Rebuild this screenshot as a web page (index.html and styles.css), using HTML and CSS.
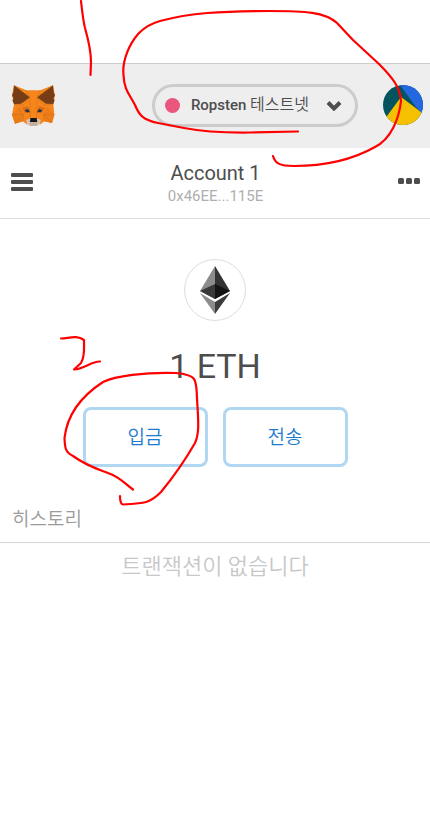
FILE: index.html
```html
<!DOCTYPE html>
<html lang="ko">
<head>
<meta charset="utf-8">
<meta name="viewport" content="width=device-width, initial-scale=1">
<title>MetaMask</title>
<link rel="stylesheet" href="styles.css">
</head>
<body>
<header class="app-header">
  <svg class="fox" viewBox="36 75 129 123" aria-hidden="true">
    <path fill="#f6851b" d="M42 76 79 91H121L159 76 165 105 160 132 163 164 156 189 132 184 122 193H79L69 184 45 191 36 164 42 133 36 105Z"/>
    <path fill="#ee7d19" d="M36 164 58 142 70 164 69 184 45 191ZM163 164 143 142 131 164 132 184 156 189Z"/>
    <path fill="#763d16" d="M42 76 90 112 63 131 42 133 37 120 41 116 36 105 40 98ZM159 76 111 112 138 131 160 132 164 120 160 116 165 105 161 98Z"/>
    <path fill="#d7c1b3" d="M79 180 91 175H111L122 180 120 191 112 197H89L80 191Z"/>
    <path fill="#c0ad9e" d="M88 187H113L111 197H90Z"/>
    <path fill="#161616" d="M91 174H110L112 186H90Z"/>
    <path fill="#d96c18" d="M66 143 84 139 91 156 75 158ZM135 143 117 139 110 156 126 158Z"/>
    <path fill="#233447" d="M74 151 84 147 90 157 79 157ZM127 151 117 147 111 157 122 157Z"/>
    <path class="fox-lines" d="M42 76 90 112 79 91M159 76 111 112 121 91M90 112 91 174M111 112 110 174M90 112 69 136 42 133M111 112 132 136 160 132M58 142 70 164 45 191M143 142 131 164 156 189M70 164 69 184M131 164 132 184M36 164H70M163 164H131"/>
  </svg>
  <button class="network" type="button">
    <span class="network-dot"></span>
    <span class="network-name">Ropsten <span class="network-kind">테스트넷</span></span>
    <svg class="chevron" viewBox="0 0 16 11" aria-hidden="true"><path d="M2 2.5 8 8.500 14 2.500"/></svg>
  </button>
  <button class="avatar" type="button" aria-label="내 계정">
    <svg viewBox="0 0 40 40" aria-hidden="true">
      <path fill="#03545e" d="M0 0H40V40H0Z"/>
      <path fill="#f5c000" d="M18 12 38 27V40H0V37L4 31Z"/>
      <path fill="#2467e0" d="M17 0H40V29L33 22Z"/>
    </svg>
  </button>
</header>

<section class="account-bar">
  <button class="icon-button" type="button" aria-label="메뉴">
    <svg class="menu-icon" viewBox="0 0 22 18" aria-hidden="true"><rect width="22" height="4" rx="1"/><rect y="7" width="22" height="4" rx="1"/><rect y="14" width="22" height="4" rx="1"/></svg>
  </button>
  <div class="account">
    <h1 class="account-name">Account 1</h1>
    <div class="account-address">0x46EE...115E</div>
  </div>
  <button class="icon-button" type="button" aria-label="계정 옵션">
    <svg class="more-icon" viewBox="0 0 22 6" aria-hidden="true"><rect width="6" height="6" rx="1.5"/><rect x="8" width="6" height="6" rx="1.5"/><rect x="16" width="6" height="6" rx="1.5"/></svg>
  </button>
</section>

<main>
  <section class="overview">
    <div class="token">
      <svg viewBox="0 0 30 48" aria-hidden="true">
        <path fill="#8c8c8c" d="M15 0V33L0 25Z"/>
        <path fill="#343434" d="M15 0V33L30 25Z"/>
        <path fill="#393939" d="M15 18V33L0 25Z"/>
        <path fill="#141414" d="M15 18V33L30 25Z"/>
        <path fill="#8c8c8c" d="M15 36V48L0 27Z"/>
        <path fill="#3c3c3b" d="M15 36V48L30 27Z"/>
      </svg>
    </div>
    <div class="balance">1 ETH</div>
    <div class="actions">
      <button class="action" type="button">입금</button>
      <button class="action" type="button">전송</button>
    </div>
  </section>
  <h2 class="history-title">히스토리</h2>
  <p class="history-empty">트랜잭션이 없습니다</p>
</main>

<svg class="marks" viewBox="0 0 430 815" aria-hidden="true">
  <path d="M81 1C82 10 83 20 85 28C89 42 91 50 91 62L90.500 75"/>
  <path d="M298 131.500L250 132.500Q210 133 184 128L158 123C143 120 139 115 135 105C130 95 124 90 123.500 75C122 61 129 44 139 33C145 27 153 23 160 21C190 13 220 11 270 11C305 11 325 12 337 23L353 40L379 64C394 79 400 88 401 101C399 119 391 139 375 147C352 160 324 166 294 166C279 166 275 163 273 156"/>
  <path d="M61 338.500C70 338 77 335 84 340C84 349 85 357 81 363L74 369.500C84 369 92 361 100 361.500"/>
  <path d="M133 489.500C124 483 120 477 108 473C95 468 87 466 73 456C65 452 65 448 64.500 438C67 416 80 397 103 382C115 376 145 372 176 373C198 375 196 380 197 398C198 418 200 432 195 443C187 457 175 475 161 492C148 505 142 503 123 504.500Q120 504 120 496"/>
</svg>
</body>
</html>
```
FILE: styles.css
```css
* {
  box-sizing: border-box;
}

body {
  position: relative;
  margin: 0;
  padding-top: 63px;
  background: #fff;
  color: #4d4d4d;
  font-family: Roboto, "Noto Sans CJK KR", sans-serif;
}

button {
  margin: 0;
  padding: 0;
  border: 0;
  background: none;
  color: inherit;
  font: inherit;
  cursor: pointer;
}

svg {
  display: block;
}

.app-header {
  display: flex;
  align-items: center;
  height: 85px;
  padding: 0 7px 2px 12px;
  border-top: 1px solid #ccc;
  background: #eee;
}

.fox {
  width: 43px;
  height: 41px;
}

.fox-lines {
  fill: none;
  stroke: #c96f1d;
  stroke-width: 1.5;
}

.network {
  display: flex;
  align-items: center;
  height: 43px;
  margin-left: auto;
  padding: 0 13px 0 10px;
  border: 3px solid #ccc;
  border-radius: 22px;
}

.network-dot {
  width: 15px;
  height: 15px;
  margin-right: 11px;
  border-radius: 50%;
  background: #e9567e;
}

.network-name {
  font-size: 15px;
  font-weight: 500;
  line-height: 20px;
}

.network-kind {
  font-size: 16px;
  font-weight: 350;
}

.chevron {
  width: 16px;
  height: 11px;
  margin-left: 17px;
  fill: none;
  stroke: #4d4d4d;
  stroke-width: 4;
}

.avatar {
  width: 40px;
  height: 40px;
  margin-left: 25px;
  overflow: hidden;
  border-radius: 50%;
}

.account-bar {
  display: flex;
  align-items: center;
  justify-content: space-between;
  height: 71px;
  padding: 0 10px 2px 11px;
  border-bottom: 1px solid #dedede;
}

.icon-button {
  fill: #4d4d4d;
}

.menu-icon {
  width: 22px;
  height: 18px;
}

.more-icon {
  width: 22px;
  height: 6px;
  margin-bottom: 2px;
}

.account {
  padding-top: 4px;
  text-align: center;
}

.account-name {
  margin: 0;
  font-size: 20px;
  font-weight: 400;
  line-height: 24px;
}

.account-address {
  color: #aeaeae;
  font-size: 15px;
  line-height: 22px;
}

.overview {
  display: flex;
  flex-direction: column;
  align-items: center;
  padding-top: 40px;
}

.token {
  display: grid;
  place-items: center;
  width: 62px;
  height: 62px;
  border: 1px solid #dedede;
  border-radius: 50%;
}

.token svg {
  width: 30px;
  height: 48px;
}

.balance {
  margin-top: 24px;
  font-size: 34px;
  line-height: 42px;
}

.actions {
  display: flex;
  gap: 15px;
  margin-top: 20px;
}

.action {
  width: 125px;
  height: 60px;
  padding-bottom: 3px;
  border: 3px solid #b0d7f2;
  border-radius: 8px;
  color: #1c7cd0;
  font-size: 19px;
  font-weight: 350;
}

.history-title {
  margin: 36px 0 0;
  padding: 0 12px 6px;
  border-bottom: 1px solid #d2d8dd;
  color: #9b9b9b;
  font-size: 19px;
  font-weight: 350;
  line-height: 33px;
}

.history-empty {
  margin: 8px 0 0;
  color: #c8c8c8;
  font-size: 22px;
  font-weight: 350;
  line-height: 32px;
  text-align: center;
}

.marks {
  position: absolute;
  top: 0;
  left: 0;
  width: 100%;
  fill: none;
  stroke: #f00;
  stroke-width: 2.2;
  stroke-linecap: round;
  stroke-linejoin: round;
  pointer-events: none;
}
```
